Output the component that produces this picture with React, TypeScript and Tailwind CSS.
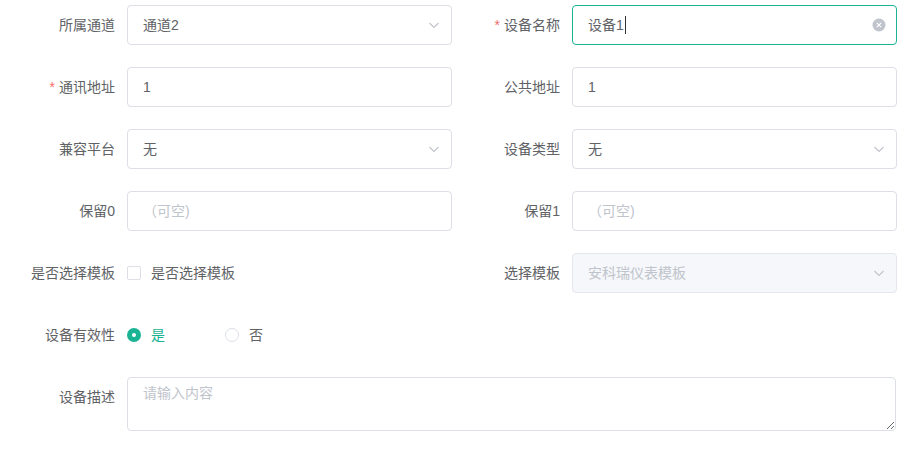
const font = { fontFamily: '"Liberation Sans", "Noto Sans CJK SC", sans-serif' }

function Chevron() {
  return (
    <svg width="14" height="14" viewBox="0 0 14 14" className="shrink-0">
      <path d="M2.5 5 L7 9.5 L11.5 5" fill="none" stroke="#c0c4cc" strokeWidth="1.1" />
    </svg>
  )
}

function Label({ text, required }: { text: string; required?: boolean }) {
  return (
    <div className="w-[120px] shrink-0 pr-3 text-right text-sm leading-10 text-[#606266]">
      {required && <span className="mr-1 text-[#f56c6c]">*</span>}
      {text}
    </div>
  )
}

function Field({
  value,
  placeholder,
  select,
  disabled,
  focused,
  clearable,
}: {
  value?: string
  placeholder?: string
  select?: boolean
  disabled?: boolean
  focused?: boolean
  clearable?: boolean
}) {
  const border = focused ? 'border-[#1ab394]' : disabled ? 'border-[#e4e7ed]' : 'border-[#dcdfe6]'
  return (
    <div
      className={`flex h-10 flex-1 items-center rounded-[4px] border pl-[15px] pr-[10px] text-sm ${border} ${
        disabled ? 'bg-[#f5f7fa]' : 'bg-white'
      }`}
    >
      <div className="flex flex-1 items-center">
        {value ? (
          <span className={disabled ? 'text-[#c0c4cc]' : 'text-[#606266]'}>{value}</span>
        ) : (
          <span className="text-[#c0c4cc]">{placeholder}</span>
        )}
        {focused && <span className="ml-px inline-block h-[18px] w-px bg-[#303133]" />}
      </div>
      {select && <Chevron />}
      {clearable && (
        <svg width="14" height="14" viewBox="0 0 14 14" className="shrink-0">
          <circle cx="7" cy="7" r="6.5" fill="#c0c4cc" />
          <path d="M4.8 4.8 L9.2 9.2 M9.2 4.8 L4.8 9.2" stroke="#fff" strokeWidth="1.1" />
        </svg>
      )}
    </div>
  )
}

function Item({ children }: { children: React.ReactNode }) {
  return <div className="flex w-[445px]">{children}</div>
}

export default function App() {
  return (
    <div className="min-h-screen bg-white pl-[7px] pt-[5px]" style={font}>
      <div className="mb-[22px] flex">
        <Item>
          <Label text="所属通道" />
          <Field value="通道2" select />
        </Item>
        <Item>
          <Label text="设备名称" required />
          <Field value="设备1" focused clearable />
        </Item>
      </div>

      <div className="mb-[22px] flex">
        <Item>
          <Label text="通讯地址" required />
          <Field value="1" />
        </Item>
        <Item>
          <Label text="公共地址" />
          <Field value="1" />
        </Item>
      </div>

      <div className="mb-[22px] flex">
        <Item>
          <Label text="兼容平台" />
          <Field value="无" select />
        </Item>
        <Item>
          <Label text="设备类型" />
          <Field value="无" select />
        </Item>
      </div>

      <div className="mb-[22px] flex">
        <Item>
          <Label text="保留0" />
          <Field placeholder="（可空)" />
        </Item>
        <Item>
          <Label text="保留1" />
          <Field placeholder="（可空)" />
        </Item>
      </div>

      <div className="mb-[22px] flex">
        <Item>
          <Label text="是否选择模板" />
          <label className="flex h-10 items-center text-sm text-[#606266]">
            <span className="inline-block h-[14px] w-[14px] rounded-[2px] border border-[#dcdfe6] bg-white" />
            <span className="ml-[10px]">是否选择模板</span>
          </label>
        </Item>
        <Item>
          <Label text="选择模板" />
          <Field value="安科瑞仪表模板" select disabled />
        </Item>
      </div>

      <div className="mb-[22px] flex">
        <Label text="设备有效性" />
        <div className="flex h-10 items-center text-sm">
          <label className="mr-[60px] flex items-center">
            <span className="flex h-[14px] w-[14px] items-center justify-center rounded-full bg-[#1ab394]">
              <span className="h-1 w-1 rounded-full bg-white" />
            </span>
            <span className="ml-[10px] text-[#1ab394]">是</span>
          </label>
          <label className="flex items-center">
            <span className="h-[14px] w-[14px] rounded-full border border-[#dcdfe6] bg-white" />
            <span className="ml-[10px] text-[#606266]">否</span>
          </label>
        </div>
      </div>

      <div className="flex">
        <Label text="设备描述" />
        <textarea
          placeholder="请输入内容"
          className="h-[54px] w-[769px] rounded-[4px] border border-[#dcdfe6] px-[15px] py-[5px] text-sm leading-[1.5] text-[#606266] outline-none placeholder:text-[#c0c4cc]"
          style={font}
        />
      </div>
    </div>
  )
}
